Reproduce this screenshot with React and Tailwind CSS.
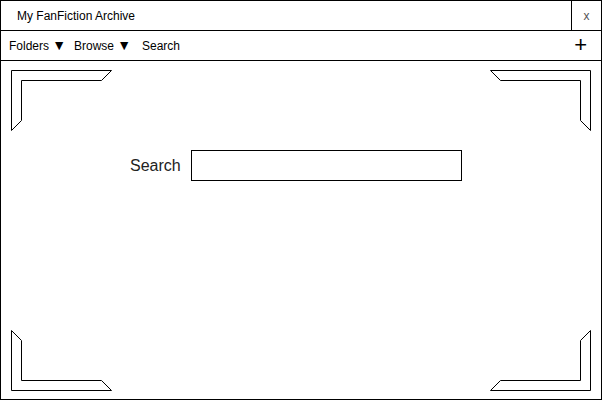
import React from 'react';

const font = { fontFamily: '"Liberation Sans", Arial, sans-serif' };

function Corner({ points, className }) {
  return (
    <svg width="102" height="62" viewBox="0 0 102 62" className={`absolute ${className}`}>
      <polygon points={points} fill="white" stroke="black" strokeWidth="1" />
    </svg>
  );
}

export default function App() {
  return (
    <div className="w-[602px] h-[400px] border border-black bg-white flex flex-col text-black" style={font}>
      <div className="flex h-[30px] border-b border-black">
        <div className="flex-1 flex items-center pl-[16px] text-[12px]">My FanFiction Archive</div>
        <div className="w-[30px] border-l border-black flex items-center justify-center text-[12px] text-[#555]">x</div>
      </div>

      <div className="flex h-[30px] border-b border-black items-center text-[12px]">
        <span className="ml-[8px] w-[65px]">Folders <span className="text-[14px]">▼</span></span>
        <span className="w-[68px]">Browse <span className="text-[14px]">▼</span></span>
        <span>Search</span>
        <span className="ml-auto mr-[14px] text-[22px] leading-none pb-[2px]">+</span>
      </div>

      <div className="relative flex-1">
        <Corner className="left-[10px] top-[9px]" points="0.5,0.5 100.5,0.5 90.5,10.5 10.5,10.5 10.5,50.5 0.5,60.5" />
        <Corner className="right-[9px] top-[9px]" points="0.5,0.5 100.5,0.5 100.5,60.5 90.5,50.5 90.5,10.5 10.5,10.5" />
        <Corner className="left-[10px] bottom-[7px]" points="0.5,0.5 10.5,10.5 10.5,50.5 90.5,50.5 100.5,60.5 0.5,60.5" />
        <Corner className="right-[9px] bottom-[7px]" points="100.5,0.5 100.5,60.5 0.5,60.5 10.5,50.5 90.5,50.5 90.5,10.5" />

        <div className="flex items-center pt-[89px] pl-[129px] gap-[10px]">
          <label className="text-[16px] text-[#222]">Search</label>
          <input type="text" className="w-[271px] h-[31px] border border-black outline-none px-2 text-[14px]" />
        </div>
      </div>
    </div>
  );
}
